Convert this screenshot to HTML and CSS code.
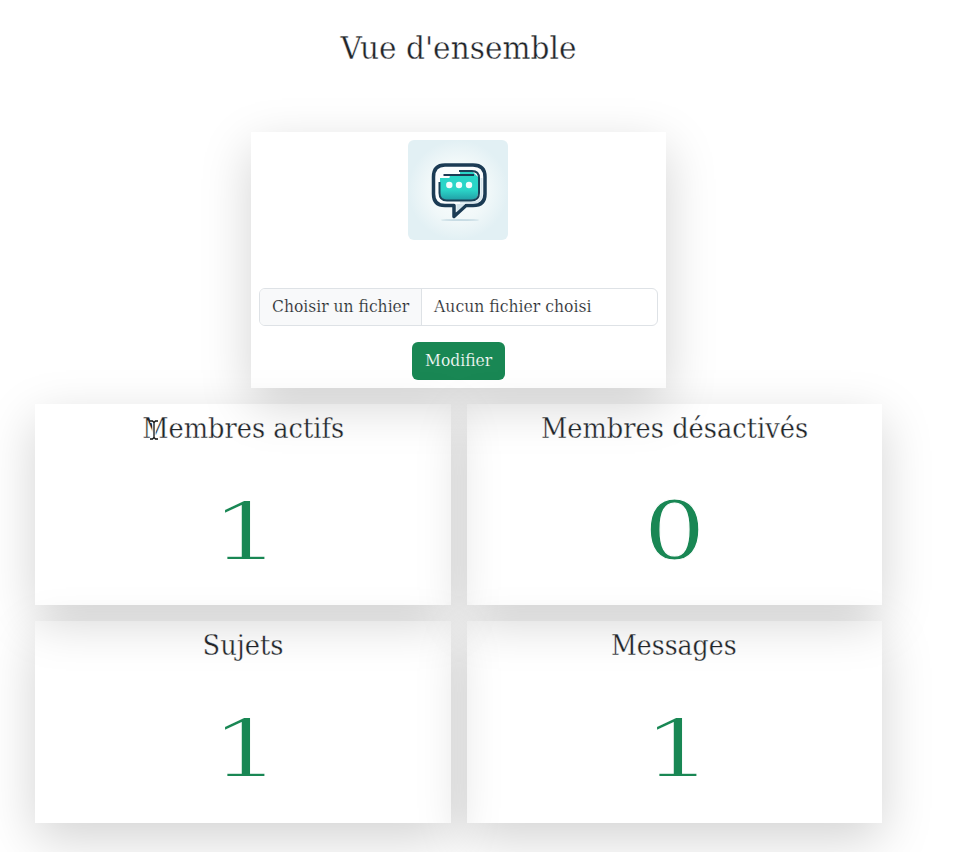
FILE: index.html
```html
<!DOCTYPE html>
<html lang="fr">
<head>
<meta charset="utf-8">
<title>Vue d'ensemble</title>
<link rel="stylesheet" href="styles.css">
</head>
<body>
<main class="overview">
  <h1 class="title"><span class="fit fit-title">Vue d'ensemble</span></h1>
  <form class="card logo-card">
    <svg class="logo" viewBox="0 0 100 100" aria-hidden="true">
      <defs>
        <radialGradient id="glow"><stop offset="0" stop-color="#fcfefe"/><stop offset=".6" stop-color="#f1f8f9"/><stop offset="1" stop-color="#e2f0f4"/></radialGradient>
        <linearGradient id="teal" x1="0" y1="0" x2="0" y2="1"><stop offset="0" stop-color="#2bd5c8"/><stop offset=".65" stop-color="#2bd5c8"/><stop offset="1" stop-color="#219fa6"/></linearGradient>
      </defs>
      <rect width="100" height="100" rx="6" fill="#e2f0f4"/>
      <circle cx="50" cy="50" r="50" fill="url(#glow)"/>
      <ellipse cx="52" cy="80" rx="19" ry="1" fill="#c8dce4"/>
      <path d="M37 25H65Q77 25 77 37V54Q77 65.500 65 65.500H58L46 76.500V65.500H37Q25.500 65.500 25.500 54V37Q25.500 25 37 25Z" fill="#fbfdfe" stroke="#1b3b54" stroke-width="3.500" stroke-linejoin="round"/>
      <path d="M48.500 64H57L48.500 72Z" fill="#d5e5ec"/>
      <path d="M73.500 38V54Q73.500 62.500 65 62.500H52" fill="none" stroke="#d5e5ec" stroke-width="2"/>
      <path d="M32 38H41V35H52V31H64L70 37V53Q70 60 63 60H39Q32 60 32 53Z" fill="url(#teal)"/>
      <path d="M31.500 42V53Q31.500 60.500 39 60.500H63Q71 60.500 71 53V38Q71 31 64 31H51" fill="none" stroke="#1b4259" stroke-width="2"/>
      <path d="M35.500 35H66" stroke="#1b3b54" stroke-width="2"/>
      <path d="M32 38V36.200H42V37.500H38V38Z" fill="#fff"/>
      <circle cx="41.300" cy="45" r="3.200" fill="#f4fdfc"/><circle cx="51" cy="45" r="3.200" fill="#f4fdfc"/><circle cx="61" cy="45" r="3.200" fill="#f4fdfc"/>
    </svg>
    <div class="file">
      <span class="file-button"><span class="fit fit-choose">Choisir un fichier</span></span>
      <span class="file-name"><span class="fit fit-name">Aucun fichier choisi</span></span>
    </div>
    <button class="submit" type="button"><span class="fit fit-submit">Modifier</span></button>
  </form>
  <div class="grid">
    <section class="card"><h2><span class="fit fit-active">Membres actifs</span>
      <svg class="caret" viewBox="0 0 12 22" aria-hidden="true"><path d="M2 2H4.500L6 3.500L7.500 2H10M6 3.500V18.500M2 20H4.500L6 18.500L7.500 20H10" fill="none" stroke="#fff" stroke-width="3.500"/><path d="M2 2H4.500L6 3.500L7.500 2H10M6 3.500V18.500M2 20H4.500L6 18.500L7.500 20H10" fill="none" stroke="#111" stroke-width="1.300"/></svg></h2>
      <p class="count"><span class="fit fit-one">1</span></p></section>
    <section class="card"><h2><span class="fit fit-inactive">Membres désactivés</span></h2><p class="count"><span class="fit fit-zero">0</span></p></section>
    <section class="card"><h2><span class="fit fit-topics">Sujets</span></h2><p class="count"><span class="fit fit-one">1</span></p></section>
    <section class="card"><h2><span class="fit fit-messages">Messages</span></h2><p class="count"><span class="fit fit-one">1</span></p></section>
  </div>
</main>
</body>
</html>
```
FILE: styles.css
```css
* { box-sizing: border-box; }
body { margin: 0; height: 852px; overflow: hidden; background: #fff; color: #212529; font: 16px/24px "DejaVu Serif", serif; }
h1, h2, p { margin: 0; font-weight: 400; }
.overview { width: 847px; margin-left: 35px; padding-top: 29px; display: flex; flex-direction: column; align-items: center; }
.title { font-size: 32px; line-height: 39px; height: 103px; white-space: nowrap; -webkit-text-stroke: .4px #fff; }
.fit { display: inline-block; white-space: nowrap; }
.fit-title { transform: scaleX(.925); }
.fit-choose { transform: scaleX(.972); }
.fit-name { transform: scaleX(.978); transform-origin: left; }
.fit-submit { transform: scaleX(.97); }
.fit-active { transform: scaleX(.917); }
.fit-inactive { transform: scaleX(.918); }
.fit-topics { transform: scaleX(.92); }
.fit-messages { transform: scaleX(.9); }
.fit-one { transform: translate(3.500px, 1.500px) scaleX(1.42); -webkit-text-stroke: 2px #fff; }
.fit-zero { transform: translateY(.5px) scaleX(1.21); }
.card { padding: 8px; box-shadow: 0 16px 48px rgba(0, 0, 0, .175); text-align: center; }
.logo-card { width: 415px; height: 256px; display: flex; flex-direction: column; align-items: center; }
.logo { width: 100px; height: 100px; flex: none; margin-right: 1px; }
.file { width: 399px; height: 38px; margin: 48px 0 16px; display: flex; border: 1px solid #dee2e6; border-radius: 6px; overflow: hidden; line-height: 35px; background: #fff; }
.file-button { width: 162px; background: #f8f9fa; border-right: 1px solid #dee2e6; -webkit-text-stroke: .2px #f8f9fa; }
.file-name { flex: 1; padding-left: 12px; text-align: left; -webkit-text-stroke: .2px #fff; }
.submit { width: 93px; height: 38px; padding: 0; border: 0; border-radius: 6px; background: #198754; color: #fff; font: inherit; line-height: 36px; -webkit-text-stroke: .2px #198754; }
.grid { width: 847px; margin-top: 16px; display: grid; grid-template-columns: 1fr 1fr; grid-auto-rows: 201.300px; gap: 16px; }
h2 { position: relative; font-size: 28px; line-height: 33px; -webkit-text-stroke: .35px #fdfdfd; }
.count { margin-top: 38px; font-size: 80px; line-height: 96px; color: #198754; -webkit-text-stroke: 1px #fff; }
.caret { position: absolute; left: 105px; top: 7px; width: 12px; height: 22px; }
```
